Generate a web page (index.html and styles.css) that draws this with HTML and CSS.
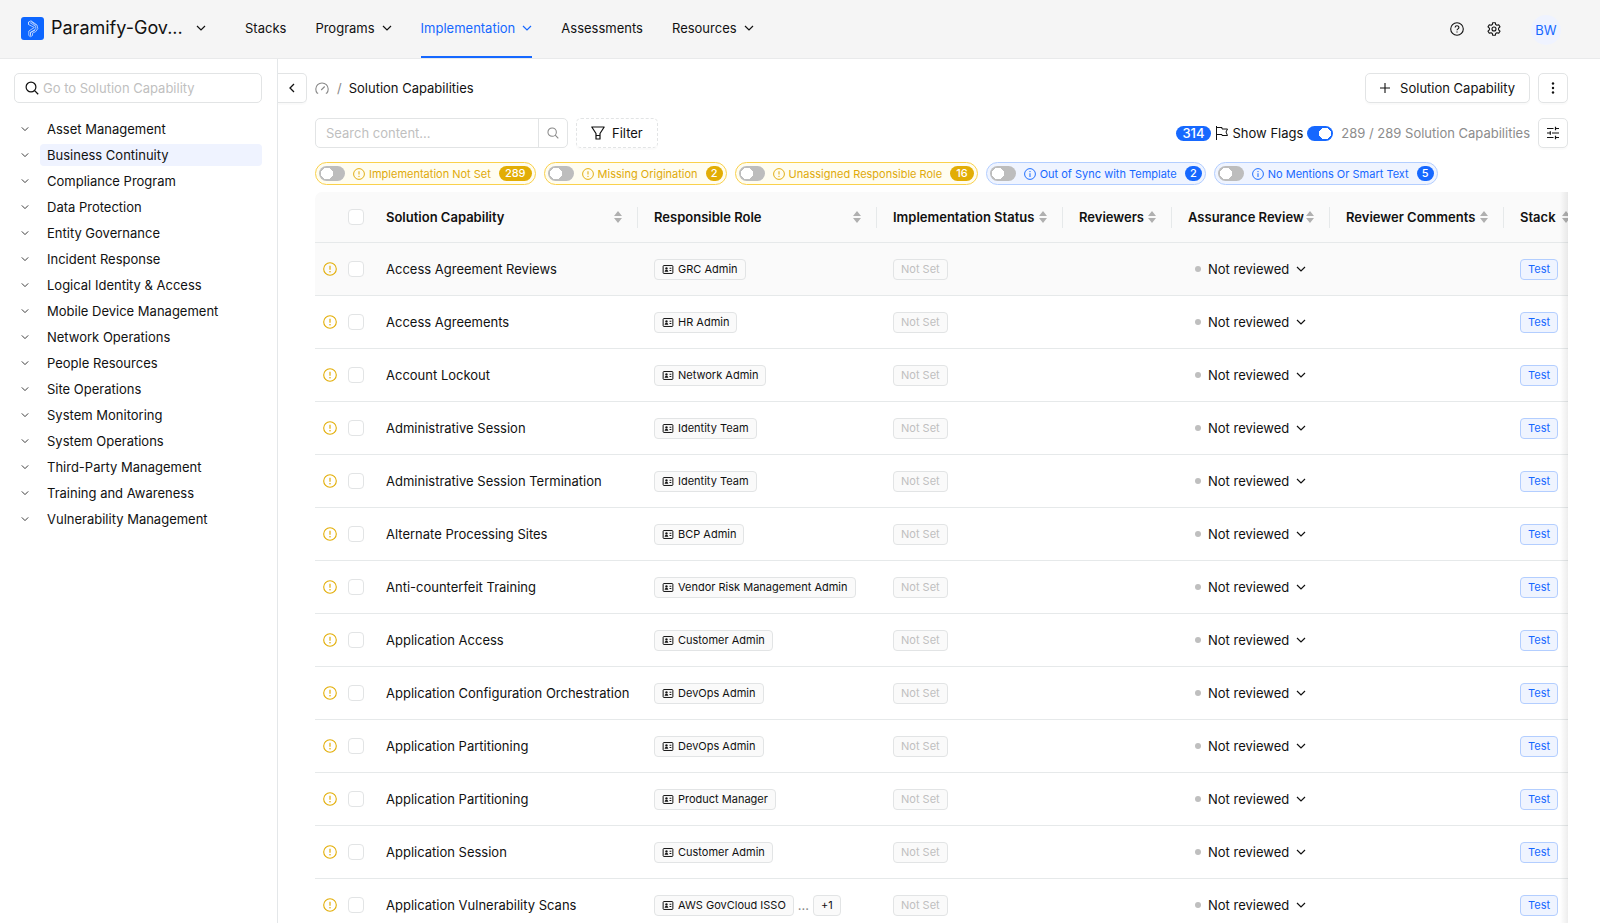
FILE: index.html
```html
<!DOCTYPE html>
<html lang="en">
<head>
<meta charset="utf-8">
<title>Solution Capabilities</title>
<link rel="stylesheet" href="styles.css">
</head>
<body>
<svg class="sprite" aria-hidden="true">
  <symbol id="down" viewBox="0 0 10 10"><path d="M1 3l4 4 4-4" fill="none" stroke="currentColor" stroke-width="1.2"/></symbol>
  <symbol id="warn" viewBox="0 0 14 14"><circle cx="7" cy="7" r="6.3" fill="none" stroke="currentColor" stroke-width="1.1"/><path d="M7 3.7v4" stroke="currentColor" stroke-width="1.2"/><circle cx="7" cy="9.7" r=".8" fill="currentColor"/></symbol>
  <symbol id="info" viewBox="0 0 14 14"><circle cx="7" cy="7" r="6.3" fill="none" stroke="currentColor" stroke-width="1.1"/><path d="M7 6.2v4.2" stroke="currentColor" stroke-width="1.2"/><circle cx="7" cy="4.2" r=".8" fill="currentColor"/></symbol>
  <symbol id="card" viewBox="0 0 12 10"><rect x=".6" y=".6" width="10.8" height="8.8" rx=".8" fill="none" stroke="currentColor" stroke-width="1.1"/><circle cx="4.3" cy="3.8" r="1.3" fill="currentColor"/><path d="M2.3 7.6c0-3 4-3 4 0zM7.7 3h2v1.2h-2zM7.7 5.6h2v1.2h-2z" fill="currentColor"/></symbol>
  <symbol id="sort" viewBox="0 0 8 12"><path d="M4 0l4 5H0zM4 12l4-5H0z" fill="#b0b0b0"/></symbol>
  <symbol id="search" viewBox="0 0 14 14"><circle cx="6" cy="6" r="4.9" fill="none" stroke="currentColor" stroke-width="1.2"/><path d="M9.6 9.6l3.6 3.6" stroke="currentColor" stroke-width="1.3"/></symbol>
</svg>

<header class="topbar">
  <button class="brand" type="button">
    <svg class="logo" viewBox="0 0 23 23"><rect width="23" height="23" rx="3" fill="#0d66ff"/><g fill="none" stroke="#cfe0ff" stroke-width=".8" stroke-linejoin="round"><path d="M7.500 5l2.500-1.200 6 4.200.8 3.500-2 3-3.300 1.700v2.300l-2 1.200-1.700-1.200v-4.500l5.500-3.500-5.800-3z"/><path d="M8.800 5.500l5.700 3.700.5 2-1.500 1.800-4 2.200v3.500M10 4.500l5.200 3.800M7.500 7.500v-2.500M9.500 18.500v-2.800l4.500-2.500"/></g></svg>
    <span class="brand-name">Paramify-Gov...</span>
    <svg class="i10"><use href="#down"/></svg>
  </button>
  <nav class="nav">
    <a href="#">Stacks</a>
    <a href="#">Programs <svg class="i10"><use href="#down"/></svg></a>
    <a href="#" class="on">Implementation <svg class="i10"><use href="#down"/></svg></a>
    <a href="#">Assessments</a>
    <a href="#">Resources <svg class="i10"><use href="#down"/></svg></a>
  </nav>
  <div class="tools">
    <button class="plain" type="button" aria-label="Help"><svg class="i14" viewBox="0 0 14 14" fill="none" stroke="currentColor" stroke-width="1.100"><circle cx="7" cy="7" r="6.300"/><path d="M5.100 5.600c0-2.400 3.800-2.400 3.800 0 0 1.300-1.900 1.300-1.900 2.700M7 9.400v1.200"/></svg></button>
    <button class="plain" type="button" aria-label="Settings"><svg class="i14" viewBox="0 0 14 14" fill="none" stroke="currentColor" stroke-width="1.100" stroke-linejoin="round"><path d="M5.700.7h2.600l.4 1.900 1.200.7 1.800-.6 1.300 2.200-1.400 1.300v1.600l1.400 1.300-1.300 2.200-1.800-.6-1.200.7-.4 1.900H5.700l-.4-1.900-1.200-.7-1.800.6L1 9.100l1.400-1.300V6.200L1 4.900l1.300-2.200 1.800.6 1.200-.7z"/><circle cx="7" cy="7" r="2"/></svg></button>
    <button class="avatar" type="button">BW</button>
  </div>
</header>

<div class="body">
  <aside class="side">
    <label class="side-search"><svg class="i14"><use href="#search"/></svg><input type="text" placeholder="Go to Solution Capability" aria-label="Go to Solution Capability"></label>
    <ul class="tree" id="tree"></ul>
  </aside>

  <main class="main">
    <div class="crumbs">
      <button class="collapse" type="button" aria-label="Collapse sidebar"><svg class="i10" viewBox="0 0 10 10"><path d="M7 1L3 5l4 4" fill="none" stroke="currentColor" stroke-width="1.300"/></svg></button>
      <a class="dash" href="#" aria-label="Dashboard"><svg class="i14" viewBox="0 0 14 14" fill="none" stroke="currentColor" stroke-width="1.100"><path d="M2.400 12.300a6.200 6.200 0 1 1 9.200 0M1.900 12.300h1.300M10.800 12.300h1.300M6.200 9l3.500-3.500"/></svg></a>
      <span class="slash">/</span>
      <span class="here">Solution Capabilities</span>
      <button class="btn add" type="button"><svg class="i10" viewBox="0 0 10 10"><path d="M5 0v10M0 5h10" stroke="currentColor" stroke-width="1.100"/></svg>Solution Capability</button>
      <button class="btn square" type="button" aria-label="More"><svg class="i14" viewBox="0 0 14 14" fill="currentColor"><circle cx="7" cy="2.500" r="1.200"/><circle cx="7" cy="7" r="1.200"/><circle cx="7" cy="11.500" r="1.200"/></svg></button>
    </div>

    <div class="content">
      <div class="bar">
        <div class="search"><input type="text" placeholder="Search content..." aria-label="Search content"><button type="button" aria-label="Search"><svg class="i12"><use href="#search"/></svg></button></div>
        <button class="btn filter" type="button"><svg class="i14" viewBox="0 0 14 14" fill="none" stroke="currentColor" stroke-width="1.200" stroke-linejoin="round"><path d="M.8 1h12.400L9 7.500V13H5V7.500zM5 9.500h4"/></svg>Filter</button>
        <div class="flags">
          <span class="pill blue">314</span>
          <svg class="i14" viewBox="0 0 14 14" fill="none" stroke="currentColor" stroke-width="1"><path d="M1.500 0v14M1.500 1.500h5.500v1.500h5.500l-1.500 3 1.500 3.500h-5.500V8.500H1.500"/></svg>
          <label for="show">Show Flags</label>
          <input class="switch" type="checkbox" role="switch" id="show" checked>
        </div>
        <span class="count">289 / 289 Solution Capabilities</span>
        <button class="btn square" type="button" aria-label="Columns"><svg class="i14" viewBox="0 0 14 14" fill="none" stroke="currentColor" stroke-width="1.200"><path d="M1 2.500h6.500M9.500 2.500H13M9.500.8v3.400M1 7h3M6 7h7M4.300 5.300v3.400M1 11.500h6.500M9.500 11.500H13M9.500 9.800v3.400"/></svg></button>
      </div>

      <div class="chips" id="chips"></div>

      <div class="tablewrap">
        <table>
          <colgroup><col class="c-flag"><col class="c-check"><col><col class="c-role"><col class="c-status"><col class="c-rev"><col class="c-assure"><col class="c-comm"><col class="c-stack"></colgroup>
          <thead><tr id="head"></tr></thead>
          <tbody id="rows"></tbody>
        </table>
      </div>
    </div>
  </main>
</div>
<script src="app.js"></script>
</body>
</html>
```
FILE: styles.css
```css
* { box-sizing: border-box; }
body { margin: 0; height: 100vh; display: flex; flex-direction: column; overflow: hidden; background: #fff; color: #111; font: 13px/20px Inter, "Liberation Sans", sans-serif; }
button, input { font: inherit; color: inherit; margin: 0; }
button { cursor: pointer; }
a { color: inherit; text-decoration: none; }
svg { flex: none; display: block; }
.sprite { position: absolute; width: 0; height: 0; }
.i10 { width: 10px; height: 10px; }
.i12 { width: 12px; height: 12px; }
.i14 { width: 14px; height: 14px; }

.topbar { flex: none; display: flex; align-items: center; height: 59px; padding: 0 39px 0 21px; background: #f5f5f5; border-bottom: 1px solid #e9eaeb; }
.brand { display: flex; align-items: center; padding: 0 0 2px; border: 0; background: none; font-size: 18px; line-height: 24px; width: 185px; }
.logo { width: 23px; height: 23px; }
.brand-name { margin-left: 7px; flex: 1; text-align: left; white-space: nowrap; }
.nav { display: flex; gap: 29px; margin-left: 39px; height: 58px; }
.nav a { display: flex; align-items: center; gap: 7px; border-bottom: 2px solid transparent; }
.nav .on { color: #1668ff; border-color: #1668ff; }
.tools { margin-left: auto; display: flex; align-items: center; gap: 23px; }
.plain { display: flex; padding: 0; border: 0; background: none; }
.avatar { width: 30px; height: 30px; margin: 2px -8px 0 7px; margin-right: 0; padding: 0; border: 0; border-radius: 50%; background: #eff3ff; color: #1668ff; }

.body { flex: 1; min-height: 0; display: flex; }
.side { flex: none; width: 278px; padding: 14px 15px 0 14px; border-right: 1px solid #e4e7e9; }
.side-search { display: flex; align-items: center; gap: 4px; height: 30px; padding: 0 10px; border: 1px solid #e2e4e5; border-radius: 5px; }
.side-search input, .search input { flex: 1; min-width: 0; border: 0; padding: 0; outline: 0; background: none; }
::placeholder { color: #bfbfbf; opacity: 1; }
.tree { list-style: none; margin: 15px 0 0; padding: 0; display: grid; gap: 4px; }
.tree li { display: flex; align-items: center; height: 22px; }
.tree button { display: flex; width: 26px; padding: 0 7px; border: 0; background: none; color: #333; }
.tree svg { width: 8px; height: 8px; }
.tree a { flex: 1; padding: 1px 7px; border-radius: 4px; }
.tree .on { background: #eff3ff; }

.main { flex: 1; min-width: 0; padding-top: 14px; display: flex; flex-direction: column; }
.crumbs { display: flex; align-items: center; padding-right: 32px; }
.collapse { display: flex; align-items: center; justify-content: center; width: 29px; height: 30px; padding: 0; border: 1px solid #e2e4e5; border-left: 0; border-radius: 0 5px 5px 0; background: #fff; box-shadow: 0 2px 1px #00000005; }
.dash { margin-left: 8px; color: #888; }
.slash { margin: 0 7px 0 8px; color: #888; }
.btn { display: flex; align-items: center; justify-content: center; height: 30px; padding: 0 14px; border: 1px solid #e2e4e5; border-radius: 5px; background: #fff; box-shadow: 0 2px 1px #00000005; white-space: nowrap; }
.add { margin-left: auto; gap: 10px; }
.square { width: 30px; padding: 0; margin-left: 8px; }

.content { flex: 1; min-height: 0; padding: 15px 32px 0 37px; display: flex; flex-direction: column; }
.bar { display: flex; align-items: center; }
.search { display: flex; width: 253px; height: 30px; border: 1px solid #e2e4e5; border-radius: 5px; }
.search input { padding: 0 10px; }
.search button { display: flex; align-items: center; justify-content: center; width: 29px; padding: 0; border: 0; border-left: 1px solid #e2e4e5; background: none; color: #888; }
.filter { margin-left: 8px; gap: 7px; border-style: dashed; }
.flags { margin-left: auto; display: flex; align-items: center; gap: 4px; }
.count { margin-left: 8px; color: #8c8c8c; }
.pill { height: 15px; padding: 0 6px; border-radius: 8px; background: #e2ad05; color: #fff; font-size: 11px; line-height: 15px; font-weight: 500; }
.pill.one { padding: 0; width: 17px; text-align: center; }
.pill.blue { background: #1668ff; }
.flags .pill { font-size: 13px; }
.switch { appearance: none; flex: none; width: 26px; height: 15px; border-radius: 8px; background: radial-gradient(circle at 8px 50%, #fff 6px, #bdbdbd 6px); cursor: pointer; }
.switch:checked { background: radial-gradient(circle at 18px 50%, #fff 6px, #1668ff 6px); }

.chips { display: flex; gap: 8px; margin: 14px 0 7px; }
.chip { display: flex; align-items: center; height: 23px; padding: 0 3px; border: 1px solid #fad14b; border-radius: 12px; background: #fffdf0; color: #e0aa0a; font-size: 11px; white-space: nowrap; cursor: pointer; }
.chip.blue { border-color: #b3ceff; background: #eff4ff; color: #1668ff; }
.chip > svg { margin: 0 4px 0 8px; }
.chip .pill { margin-left: 8px; }

.tablewrap { position: relative; flex: 1; min-height: 0; overflow: hidden; border-radius: 7px 0 0 0; }
.tablewrap::after { content: ""; position: absolute; inset: 0 0 0 auto; width: 8px; background: linear-gradient(to right, #00000000, #00000012); pointer-events: none; }
table { width: calc(100% + 15px); table-layout: fixed; border-collapse: separate; border-spacing: 0; }
.c-flag { width: 29px; }
.c-check { width: 26px; }
.c-role { width: 239px; }
.c-status { width: 186px; }
.c-rev { width: 109px; }
.c-assure { width: 158px; }
.c-comm { width: 174px; }
.c-stack { width: 79px; }
th { height: 51px; padding: 0; background: #fafafa; border-bottom: 1px solid #e6e9ea; font-weight: 600; text-align: left; }
th .hd { display: flex; align-items: center; justify-content: space-between; height: 21px; padding: 0 15px 0 16px; border-right: 1px solid #e6e9ea; white-space: nowrap; }
th:last-child .hd { justify-content: flex-start; gap: 6px; border: 0; }
th .hd svg { width: 8px; height: 12px; }
td { height: 53px; padding: 0 16px; border-bottom: 1px solid #e6e9ea; white-space: nowrap; }
tr:first-child > td { background: #fafafa; }
td.f { padding: 0 0 0 8px; color: #e2ad05; }
td.k, th.k { padding: 0 0 0 4px; }
.box { appearance: none; display: block; width: 16px; height: 16px; border: 1px solid #e2e4e5; border-radius: 4px; background: #fff; }
.cell { display: flex; align-items: center; gap: 4px; }
.tag { display: flex; align-items: center; gap: 4px; height: 21px; padding: 0 7px; border: 1px solid #e2e4e5; border-radius: 4px; background: #fafafa; font-size: 11px; line-height: 19px; }
.tag svg { width: 12px; height: 9px; }
.tag.off { color: #bfbfbf; }
.tag.stack { background: #eff4ff; border-color: #b3ceff; color: #1668ff; }
.dots { color: #888; }
.review { display: flex; align-items: center; gap: 7px; padding: 0 0 0 7px; border: 0; background: none; }
.review i { width: 6px; height: 6px; border-radius: 50%; background: #bfbfbf; }
```
FILE: app.js
```js
const use = (id, cls) => `<svg class="${cls || ''}"><use href="#${id}"/></svg>`;

const groups = ['Asset Management', 'Business Continuity', 'Compliance Program', 'Data Protection', 'Entity Governance', 'Incident Response', 'Logical Identity &amp; Access', 'Mobile Device Management', 'Network Operations', 'People Resources', 'Site Operations', 'System Monitoring', 'System Operations', 'Third-Party Management', 'Training and Awareness', 'Vulnerability Management'];
document.getElementById('tree').innerHTML = groups.map((g, i) =>
  `<li><button type="button" aria-label="Expand ${g}">${use('down')}</button><a href="#"${i === 1 ? ' class="on"' : ''}>${g}</a></li>`).join('');

const chips = [['Implementation Not Set', 289, 'warn'], ['Missing Origination', 2, 'warn'], ['Unassigned Responsible Role', 16, 'warn'], ['Out of Sync with Template', 2, 'info'], ['No Mentions Or Smart Text', 5, 'info']];
document.getElementById('chips').innerHTML = chips.map(([t, n, k]) => {
  const blue = k === 'info' ? ' blue' : '';
  return `<label class="chip${blue}"><input class="switch" type="checkbox" role="switch">${use(k, 'i12')}<span>${t}</span><span class="pill${blue}${n < 10 ? ' one' : ''}">${n}</span></label>`;
}).join('');

const heads = ['Solution Capability', 'Responsible Role', 'Implementation Status', 'Reviewers', 'Assurance Review', 'Reviewer Comments', 'Stack'];
document.getElementById('head').innerHTML = '<th></th><th class="k"><input class="box" type="checkbox" aria-label="Select all"></th>' +
  heads.map(h => `<th><div class="hd"><span>${h}</span>${use('sort')}</div></th>`).join('');

const rows = [['Access Agreement Reviews', 'GRC Admin'], ['Access Agreements', 'HR Admin'], ['Account Lockout', 'Network Admin'], ['Administrative Session', 'Identity Team'], ['Administrative Session Termination', 'Identity Team'], ['Alternate Processing Sites', 'BCP Admin'], ['Anti-counterfeit Training', 'Vendor Risk Management Admin'], ['Application Access', 'Customer Admin'], ['Application Configuration Orchestration', 'DevOps Admin'], ['Application Partitioning', 'DevOps Admin'], ['Application Partitioning', 'Product Manager'], ['Application Session', 'Customer Admin'], ['Application Vulnerability Scans', 'AWS GovCloud ISSO', '+1']];
document.getElementById('rows').innerHTML = rows.map(([name, role, more]) => `<tr>
  <td class="f">${use('warn', 'i14')}</td>
  <td class="k"><input class="box" type="checkbox" aria-label="Select ${name}"></td>
  <td>${name}</td>
  <td><div class="cell"><span class="tag">${use('card')}${role}</span>${more ? `<span class="dots">...</span><span class="tag">${more}</span>` : ''}</div></td>
  <td><div class="cell"><span class="tag off">Not Set</span></div></td>
  <td></td>
  <td><button class="review" type="button"><i></i>Not reviewed${use('down', 'i10')}</button></td>
  <td></td>
  <td><div class="cell"><span class="tag stack">Test</span></div></td>
</tr>`).join('');
```
